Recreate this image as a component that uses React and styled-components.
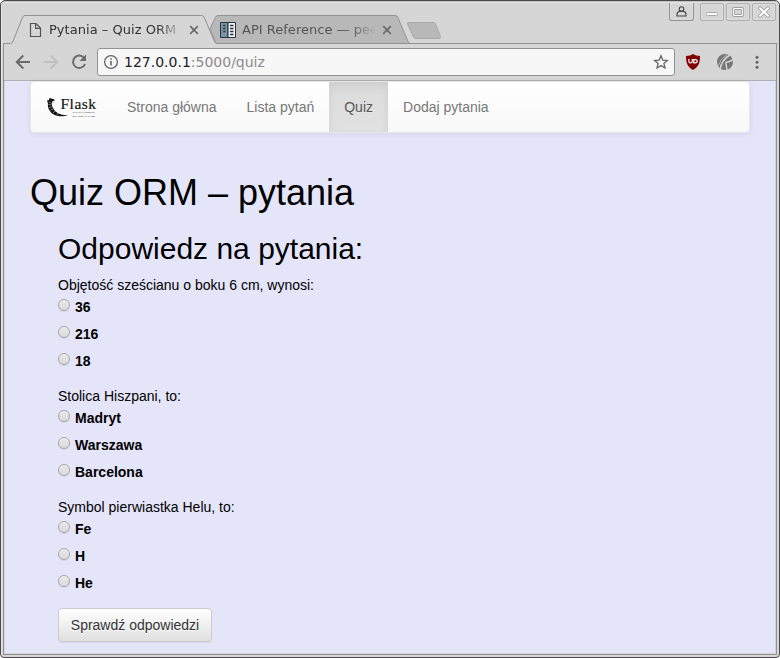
import React from "react";
import styled, { createGlobalStyle } from "styled-components";

const Global = createGlobalStyle`
  *, *::before, *::after { box-sizing: border-box; }
  body { margin: 0; background: #fff; overflow: hidden; }
`;

const ui = `"DejaVu Sans", sans-serif`;
const web = `"Liberation Sans", Arial, sans-serif`;

const Window = styled.div`
  width: 780px;
  height: 658px;
  display: flex;
  flex-direction: column;
  background: #d6d6d6;
  border: 1px solid #4b494b;
  border-radius: 5px 5px 4px 4px;
  box-shadow: inset 0 1px 0 #c4c3c4, inset 0 2px 0 #e3e3e3, inset 1px 0 0 #e6e6e6;
  overflow: hidden;
`;

const TabStrip = styled.div`
  height: 43px;
  flex: none;
  display: flex;
  align-items: flex-start;
  padding: 14px 0 0 2px;
  position: relative;
`;

const TabBox = styled.div`
  position: relative;
  z-index: ${(p) => (p.$active ? 2 : 1)};
  width: ${(p) => p.$width}px;
  margin-left: ${(p) => (p.$active ? 0 : -9)}px;
  height: 30px;
  display: flex;
  align-items: center;
  padding: 0 18px 0 ${(p) => (p.$active ? 24 : 9)}px;
`;

const TabShape = styled.svg`
  position: absolute;
  left: 0;
  top: 0;
  z-index: -1;
  overflow: visible;
`;

const TabIcon = styled.svg`
  flex: none;
  width: 18px;
  height: 18px;
`;

const TabTitle = styled.span`
  font: 13px/18px ${ui};
  letter-spacing: ${(p) => (p.$active ? 0.03 : 0.02)}px;
  color: ${(p) => (p.$active ? "#333" : "#555")};
  width: ${(p) => (p.$active ? 132 : 134)}px;
  margin-left: ${(p) => (p.$active ? 4 : 5)}px;
  overflow: hidden;
  white-space: nowrap;
  mask-image: linear-gradient(90deg, #000 108px, transparent 134px);
`;

const CloseIcon = styled.svg`
  width: 10px;
  height: 10px;
  flex: none;
  margin-left: 8px;
`;

const NewTab = styled.svg`
  margin: 6px 0 0 -4px;
  position: relative;
  z-index: 1;
`;

const WindowButtons = styled.div`
  display: flex;
  gap: 2px;
  align-self: flex-start;
  margin: -12px 3px 0 auto;
`;

const WindowButton = styled.div`
  width: 24px;
  height: 18px;
  border: 1px solid #adadad;
  border-radius: 2px;
  display: grid;
  place-items: center;
  box-shadow: inset 0 0 0 1px #dedede;
`;

const UserButton = styled(WindowButton)`
  width: 25px;
  height: 18px;
  border-color: #929292;
  border-top: 0;
  border-radius: 0 0 3px 3px;
  margin-right: 4px;
`;

const Frame = styled.div`
  flex: 1;
  margin: 0 2px 2px;
  border: 1px solid #929292;
  border-top: 0;
  display: flex;
  flex-direction: column;
  min-height: 0;
`;

const Toolbar = styled.div`
  height: 37px;
  flex: none;
  display: flex;
  align-items: center;
  border-bottom: 1px solid #b0afb1;
  padding-left: 10px;
`;

const NavIcon = styled.svg`
  width: 18px;
  height: 18px;
  flex: none;
  margin-right: 10px;
`;

const Address = styled.div`
  width: 578px;
  height: 28px;
  margin-left: -1px;
  border: 1px solid #929292;
  border-radius: 3px;
  background: #f7f7f7;
  display: flex;
  align-items: center;
  padding: 0 5px;
`;

const Url = styled.span`
  font: 14px/20px ${ui};
  color: #222;
  margin: 0 auto 0 5px;
`;

const UrlPath = styled.span`
  color: #8b8b8b;
`;

const Extensions = styled.div`
  display: flex;
  align-items: center;
  gap: 14px;
  margin-left: 9px;
`;

const MenuDots = styled.svg`
  width: 6px;
  height: 16px;
  margin-left: 6px;
  fill: #666;
`;

const Page = styled.main`
  flex: 1;
  background: #e5e5fa;
  border: solid #d4d3d8;
  border-width: 0 1px 1px;
  padding: 0 25px;
  color: #000;
  font: 14px/20px ${web};
`;

const Navbar = styled.nav`
  display: flex;
  width: 720px;
  height: 52px;
  border: 1px solid #e7e7e7;
  border-radius: 4px;
  background: linear-gradient(#fff, #f8f8f8) padding-box;
  box-shadow: inset 0 1px 0 rgba(255, 255, 255, 0.15), 0 1px 5px rgba(0, 0, 0, 0.075);
`;

const Brand = styled.div`
  width: 81px;
  padding: 14px 0 0 15px;
`;

const NavLink = styled.a`
  padding: 15px;
  height: 50px;
  color: ${(p) => (p.$active ? "#555" : "#777")};
  text-shadow: 0 1px 0 rgba(255, 255, 255, 0.25);
  background: ${(p) => (p.$active ? "linear-gradient(#dbdbdb, #e2e2e2)" : "none")};
  box-shadow: ${(p) => (p.$active ? "inset 0 3px 9px rgba(0,0,0,.075)" : "none")};
`;

const Title = styled.h1`
  font: 400 36px/40px ${web};
  margin: 40px 0 10px;
`;

const Quiz = styled.form`
  margin: 0 0 0 28px;
`;

const Subtitle = styled.h2`
  font: 400 30px/33px ${web};
  margin: 19px 0 10px;
`;

const Question = styled.div`
  margin-bottom: 15px;
`;

const Option = styled.label`
  display: flex;
  height: 22px;
  margin-bottom: 5px;
  padding-top: 2px;
  font-weight: 700;
  align-items: center;
`;

const Radio = styled.input`
  appearance: none;
  width: 12px;
  height: 12px;
  margin: 0 5px 5px 0;
  border: 1px solid #a5a5a5;
  border-radius: 50%;
  background: linear-gradient(#e6e6e6, #dcdcdc);
  box-shadow: inset 0 1px 1px #f2f2f2, 0 1px 1px rgba(0, 0, 0, 0.08);
`;

const Submit = styled.button`
  display: block;
  width: 154px;
  height: 34px;
  padding: 0;
  border: 1px solid #ccc;
  border-radius: 4px;
  background: linear-gradient(#fff, #e0e0e0);
  box-shadow: inset 0 1px 0 rgba(255, 255, 255, 0.15), 0 1px 1px rgba(0, 0, 0, 0.075);
  color: #333;
  text-shadow: 0 1px 0 #fff;
  font: 14px/20px ${web};
`;

const Close = () => (
  <CloseIcon viewBox="0 0 10 10">
    <path d="M1.2 1.2 8.8 8.8M8.8 1.2 1.2 8.8" stroke="#6a6a6a" strokeWidth="1.7" />
  </CloseIcon>
);

const FlaskLogo = () => (
  <svg width="52" height="24" viewBox="0 0 52 24">
    <path d="M3.5 1.8 5 2.6 8 3.2 9 4.6 6.8 5 5.6 7.2C5.8 11 8 15 12 17.2c3 1.6 6.5 2 10 1.8-3.8 1.4-9 1.8-12.8.2C4 17 1.4 12.2 1.9 7.2L1 4.4 3 4Z" fill="#151515" />
    <path d="M6 5.5 8.5 7M2.8 6l1.8.6M2.5 8.5l2.6.3M3 11.5l2.8-.6M4.5 14.3l2.6-1.4M7 17l2-2M11 19l1-2" stroke="#999" strokeWidth=".8" fill="none" />
    <text x="14.5" y="13.2" fontFamily="Liberation Serif, serif" fontSize="15.5" textLength="35.5" lengthAdjust="spacing" fill="#151515" stroke="#151515" strokeWidth=".2">Flask</text>
    <text x="26.5" y="17.4" fontFamily="Liberation Serif, serif" fontSize="2.6" textLength="23" fill="#111">web development,</text>
    <text x="26.5" y="20.5" fontFamily="Liberation Serif, serif" fontSize="2.6" textLength="23" fill="#111">one drop at a time</text>
  </svg>
);

const questions = [
  { text: "Objętość sześcianu o boku 6 cm, wynosi:", answers: ["36", "216", "18"] },
  { text: "Stolica Hiszpani, to:", answers: ["Madryt", "Warszawa", "Barcelona"] },
  { text: "Symbol pierwiastka Helu, to:", answers: ["Fe", "H", "He"] },
];

const links = ["Strona główna", "Lista pytań", "Quiz", "Dodaj pytania"];

export default function App() {
  return (
    <>
      <Global />
      <Window>
        <TabStrip>
          <TabBox $active $width={216}>
            <TabShape width="777" height="30">
              <path d="M407 28.5H774.5" stroke="#929292" />
              <path d="M0 30V28.5H7.5Q9 28.5 9.7 27L19.5 2.3Q20.3.5 22 .5H198.5Q200.3.5 201 2L211.8 27Q212.5 28.5 214 28.5V30Z" fill="#d6d6d6" />
              <path d="M.5 30V28.5H7.5Q9 28.5 9.7 27L19.5 2.3Q20.3.5 22 .5H198.5Q200.3.5 201 2L211.8 27Q212.5 28.5 214 28.5" fill="none" stroke="#929292" />
            </TabShape>
            <TabIcon viewBox="0 0 18 18" fill="none" stroke="#555" strokeWidth="1.2">
              <path d="M3.5 2.5H9L13.5 7V15.5H3.5ZM8.6 2.8V7.3H13.2" />
            </TabIcon>
            <TabTitle $active>Pytania – Quiz ORM</TabTitle>
            <Close />
          </TabBox>
          <TabBox $width={200}>
            <TabShape width="200" height="30">
              <path d="M6 28.5 0 14 5.4 2.3Q6.2.5 8 .5H185Q187 .5 187.8 2.3L198 26.5Q199 28.5 200 28.5Z" fill="#b8b8b8" stroke="#929292" />
            </TabShape>
            <TabIcon viewBox="0 0 18 18">
              <path d="M1.5 1.5H16.5V16.5H1.5Z" fill="#7893a3" stroke="#29353d" />
              <path d="M9.5 2H16V16H9.5Z" fill="#f0f3f5" />
              <path d="M8.8 1.5V16.5" stroke="#29353d" strokeWidth="1.2" />
              <path d="M4.2 4.5H6.4M4.2 7.5H6.4M4.2 10.5H6.4M11 4.5H14.5M11 7.5H14.5M11 10.5H14.5M11 13.5H14.5" stroke="#29353d" strokeWidth="1.3" />
            </TabIcon>
            <TabTitle>API Reference — pee</TabTitle>
            <Close />
          </TabBox>
          <NewTab width="38" height="20">
            <path d="M2.5 1.5H27Q29 1.5 29.6 3L34.4 15.5Q35 17.5 33 17.5H9.5Q8 17.5 7.3 15.8L1.6 3Q1 1.5 2.5 1.5Z" fill="#b8b8b8" stroke="#a9a9a9" />
          </NewTab>
          <WindowButtons>
            <UserButton>
              <svg width="13" height="13" viewBox="0 0 13 13" fill="none" stroke="#444" strokeWidth="1.1"><circle cx="6.5" cy="4" r="2.3" /><path d="M2 11V9Q2 7 4.8 6.2H8.2Q11 7 11 9V11Z" /></svg>
            </UserButton>
            <WindowButton>
              <svg width="14" height="14"><rect x="1.5" y="7.5" width="11" height="3" rx="1" fill="#fff" stroke="#aaa" /></svg>
            </WindowButton>
            <WindowButton>
              <svg width="14" height="14" fill="none"><rect x="2.5" y="3.5" width="9" height="7" rx="1" stroke="#a0a0a0" strokeWidth="3" /><rect x="2.5" y="3.5" width="9" height="7" rx="1" stroke="#fff" strokeWidth="1.2" /></svg>
            </WindowButton>
            <WindowButton>
              <svg width="14" height="14" fill="none" strokeLinecap="round"><path d="M3 3.2 11 10.8M11 3.2 3 10.8" stroke="#999" strokeWidth="3.6" /><path d="M3 3.2 11 10.8M11 3.2 3 10.8" stroke="#fff" strokeWidth="2" /></svg>
            </WindowButton>
          </WindowButtons>
        </TabStrip>
        <Frame>
          <Toolbar>
            <NavIcon viewBox="0 0 18 18" fill="none" stroke="#6b6b6b" strokeWidth="2"><path d="M16 9H3M9.3 2.5 2.8 9 9.3 15.5" /></NavIcon>
            <NavIcon viewBox="0 0 18 18" fill="none" stroke="#c0c0c0" strokeWidth="2"><path d="M2 9H15M8.7 2.5 15.2 9 8.7 15.5" /></NavIcon>
            <NavIcon viewBox="0 0 18 18"><path d="M14.3 5.2A6.2 6.2 0 1 0 15 11" fill="none" stroke="#6b6b6b" strokeWidth="2" /><path d="M16 1.5V8H9.5Z" fill="#6b6b6b" /></NavIcon>
            <Address>
              <svg width="16" height="16" fill="none" stroke="#666"><circle cx="8" cy="8" r="6.4" strokeWidth="1.3" /><path d="M8 7V11.5M8 4.2V5.8" strokeWidth="1.6" /></svg>
              <Url>127.0.0.1<UrlPath>:5000/quiz</UrlPath></Url>
              <svg width="16" height="16" fill="none" stroke="#666" strokeWidth="1.3"><path d="M8 1.8 9.8 6.1 14.4 6.5 10.9 9.5 12 14 8 11.6 4 14 5.1 9.5 1.6 6.5 6.2 6.1Z" /></svg>
            </Address>
            <Extensions>
              <svg width="18" height="18"><path d="M9 1Q11.5 3 16 3C16 10 14.5 14 9 17C3.5 14 2 10 2 3Q6.5 3 9 1Z" fill="#800000" /><path d="M4.9 6V8.3Q4.9 10 6.6 10T8.3 8.3V6M9.8 6.6V9.9H11.2Q13.2 9.9 13.2 8.2T11.2 6.6Z" fill="none" stroke="#fff" strokeWidth="1.2" /></svg>
              <svg width="18" height="18"><circle cx="9" cy="9" r="8" fill="#777" /><path d="M4 16.5Q5.5 7 14.5 1.5M9.8 9.5 11 17.5M9.8 9.5Q13.5 9 17.5 6.5" stroke="#d6d6d6" strokeWidth="1.5" fill="none" /><path d="M2 13Q4.5 6 11 1.5" stroke="#c8c8c8" strokeWidth=".8" fill="none" /></svg>
              <MenuDots viewBox="0 0 6 16"><circle cx="3" cy="3.3" r="1.5" /><circle cx="3" cy="8.3" r="1.5" /><circle cx="3" cy="13.3" r="1.5" /></MenuDots>
            </Extensions>
          </Toolbar>
          <Page>
            <Navbar>
              <Brand><FlaskLogo /></Brand>
              {links.map((l) => <NavLink key={l} $active={l === "Quiz"}>{l}</NavLink>)}
            </Navbar>
            <Title>Quiz ORM – pytania</Title>
            <Quiz>
              <Subtitle>Odpowiedz na pytania:</Subtitle>
              {questions.map((q, i) => (
                <Question key={q.text}>
                  {q.text}
                  {q.answers.map((a) => (
                    <Option key={a}><Radio type="radio" name={`q${i}`} />{a}</Option>
                  ))}
                </Question>
              ))}
              <Submit type="button">Sprawdź odpowiedzi</Submit>
            </Quiz>
          </Page>
        </Frame>
      </Window>
    </>
  );
}
